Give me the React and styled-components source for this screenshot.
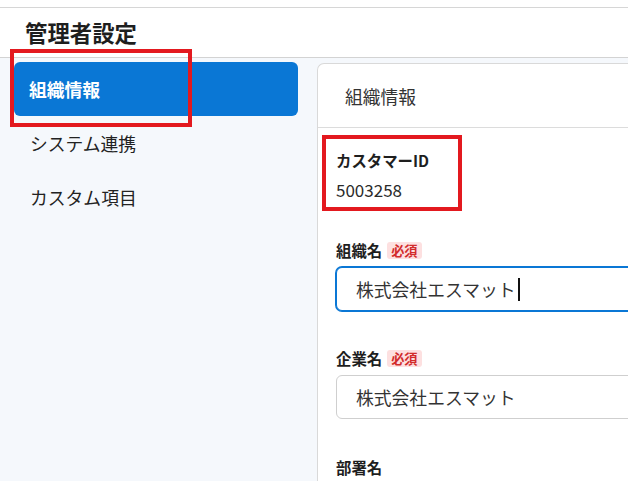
import React from 'react';
import styled, { createGlobalStyle } from 'styled-components';

const GlobalStyle = createGlobalStyle`
  html, body {
    margin: 0;
    padding: 0;
    background: #ffffff;
  }
  body {
    font-family: "Noto Sans CJK JP", "Noto Sans", sans-serif;
    color: #222222;
  }
`;

const Screen = styled.div`
  position: relative;
  width: 628px;
  height: 481px;
  overflow: hidden;
  background: #ffffff;
`;

const TopStrip = styled.div`
  height: 7px;
  border-bottom: 1px solid #d6d6d6;
`;

const Header = styled.header`
  display: flex;
  align-items: center;
  height: 49px;
  padding-left: 25px;
  border-bottom: 1px solid #d3d3d3;
`;

const Title = styled.h1`
  margin: 0;
  font-size: 22.4px;
  font-weight: 700;
  line-height: 1;
  color: #1e1e1e;
`;

const Body = styled.div`
  display: flex;
  height: 423px;
  background: #f5f8fc;
`;

const Sidebar = styled.nav`
  flex-shrink: 0;
  width: 317px;
  box-sizing: border-box;
  padding: 4px 19px 0 14px;
`;

const NavItem = styled.div`
  display: flex;
  align-items: center;
  height: 54px;
  padding-left: ${p => (p.$active ? 15 : 16)}px;
  border-radius: 6px;
  font-size: 17.8px;
  font-weight: ${p => (p.$active ? 700 : 400)};
  color: ${p => (p.$active ? '#ffffff' : '#222222')};
  background: ${p => (p.$active ? '#0a77d5' : 'transparent')};
`;

const Card = styled.section`
  flex-shrink: 0;
  width: 360px;
  margin-top: 5px;
  background: #ffffff;
  border: 1px solid #d9d9d9;
  border-right: none;
  border-bottom: none;
  border-top-left-radius: 7px;
`;

const CardHeader = styled.div`
  display: flex;
  align-items: center;
  height: 63px;
  padding-left: 27px;
  border-bottom: 1px solid #dcdcdc;
  font-size: 17.8px;
  color: #333333;
`;

const CardBody = styled.div`
  padding: 21px 0 0 18px;
`;

const Field = styled.div`
  margin-top: ${p => p.$gap || 0}px;
`;

const Label = styled.div`
  display: flex;
  align-items: center;
  gap: 5px;
  height: 22px;
  font-size: 15.4px;
  font-weight: 700;
  color: #1e1e1e;
`;

const Required = styled.span`
  display: inline-flex;
  align-items: center;
  height: 17px;
  padding: 0 4px;
  border-radius: 3px;
  background: #fde0e0;
  color: #d22b2b;
  font-size: 13.2px;
  font-weight: 700;
`;

const Value = styled.div`
  margin-top: 8px;
  height: 22px;
  line-height: 22px;
  font-size: 17px;
  color: #2a2a2a;
`;

const InputBox = styled.div`
  display: flex;
  align-items: center;
  box-sizing: border-box;
  width: 340px;
  height: 44px;
  margin-top: 6px;
  padding-left: 19px;
  border: 1px solid ${p => (p.$focused ? '#0a77d5' : '#cfcfcf')};
  box-shadow: ${p => (p.$focused ? '0 0 0 1px #0a77d5' : 'none')};
  border-radius: 6px;
  background: #ffffff;
  font-size: 17.8px;
  color: #333333;
`;

const Caret = styled.span`
  display: inline-block;
  width: 2px;
  height: 23px;
  margin-left: 2px;
  background: #111111;
`;

const Highlight = styled.div`
  position: absolute;
  box-sizing: border-box;
  border: 4px solid #e3191f;
  pointer-events: none;
`;

export default function App() {
  return (
    <Screen>
      <GlobalStyle />
      <TopStrip />
      <Header>
        <Title>管理者設定</Title>
      </Header>
      <Body>
        <Sidebar>
          <NavItem $active>組織情報</NavItem>
          <NavItem>システム連携</NavItem>
          <NavItem>カスタム項目</NavItem>
        </Sidebar>
        <Card>
          <CardHeader>組織情報</CardHeader>
          <CardBody>
            <Field>
              <Label>カスタマーID</Label>
              <Value>5003258</Value>
            </Field>
            <Field $gap={38}>
              <Label>
                組織名<Required>必須</Required>
              </Label>
              <InputBox $focused>
                株式会社エスマット
                <Caret />
              </InputBox>
            </Field>
            <Field $gap={36}>
              <Label>
                企業名<Required>必須</Required>
              </Label>
              <InputBox>株式会社エスマット</InputBox>
            </Field>
            <Field $gap={37}>
              <Label>部署名</Label>
            </Field>
          </CardBody>
        </Card>
      </Body>
      <Highlight style={{ left: 10, top: 49, width: 182, height: 78 }} />
      <Highlight style={{ left: 322, top: 135, width: 140, height: 76 }} />
    </Screen>
  );
}
